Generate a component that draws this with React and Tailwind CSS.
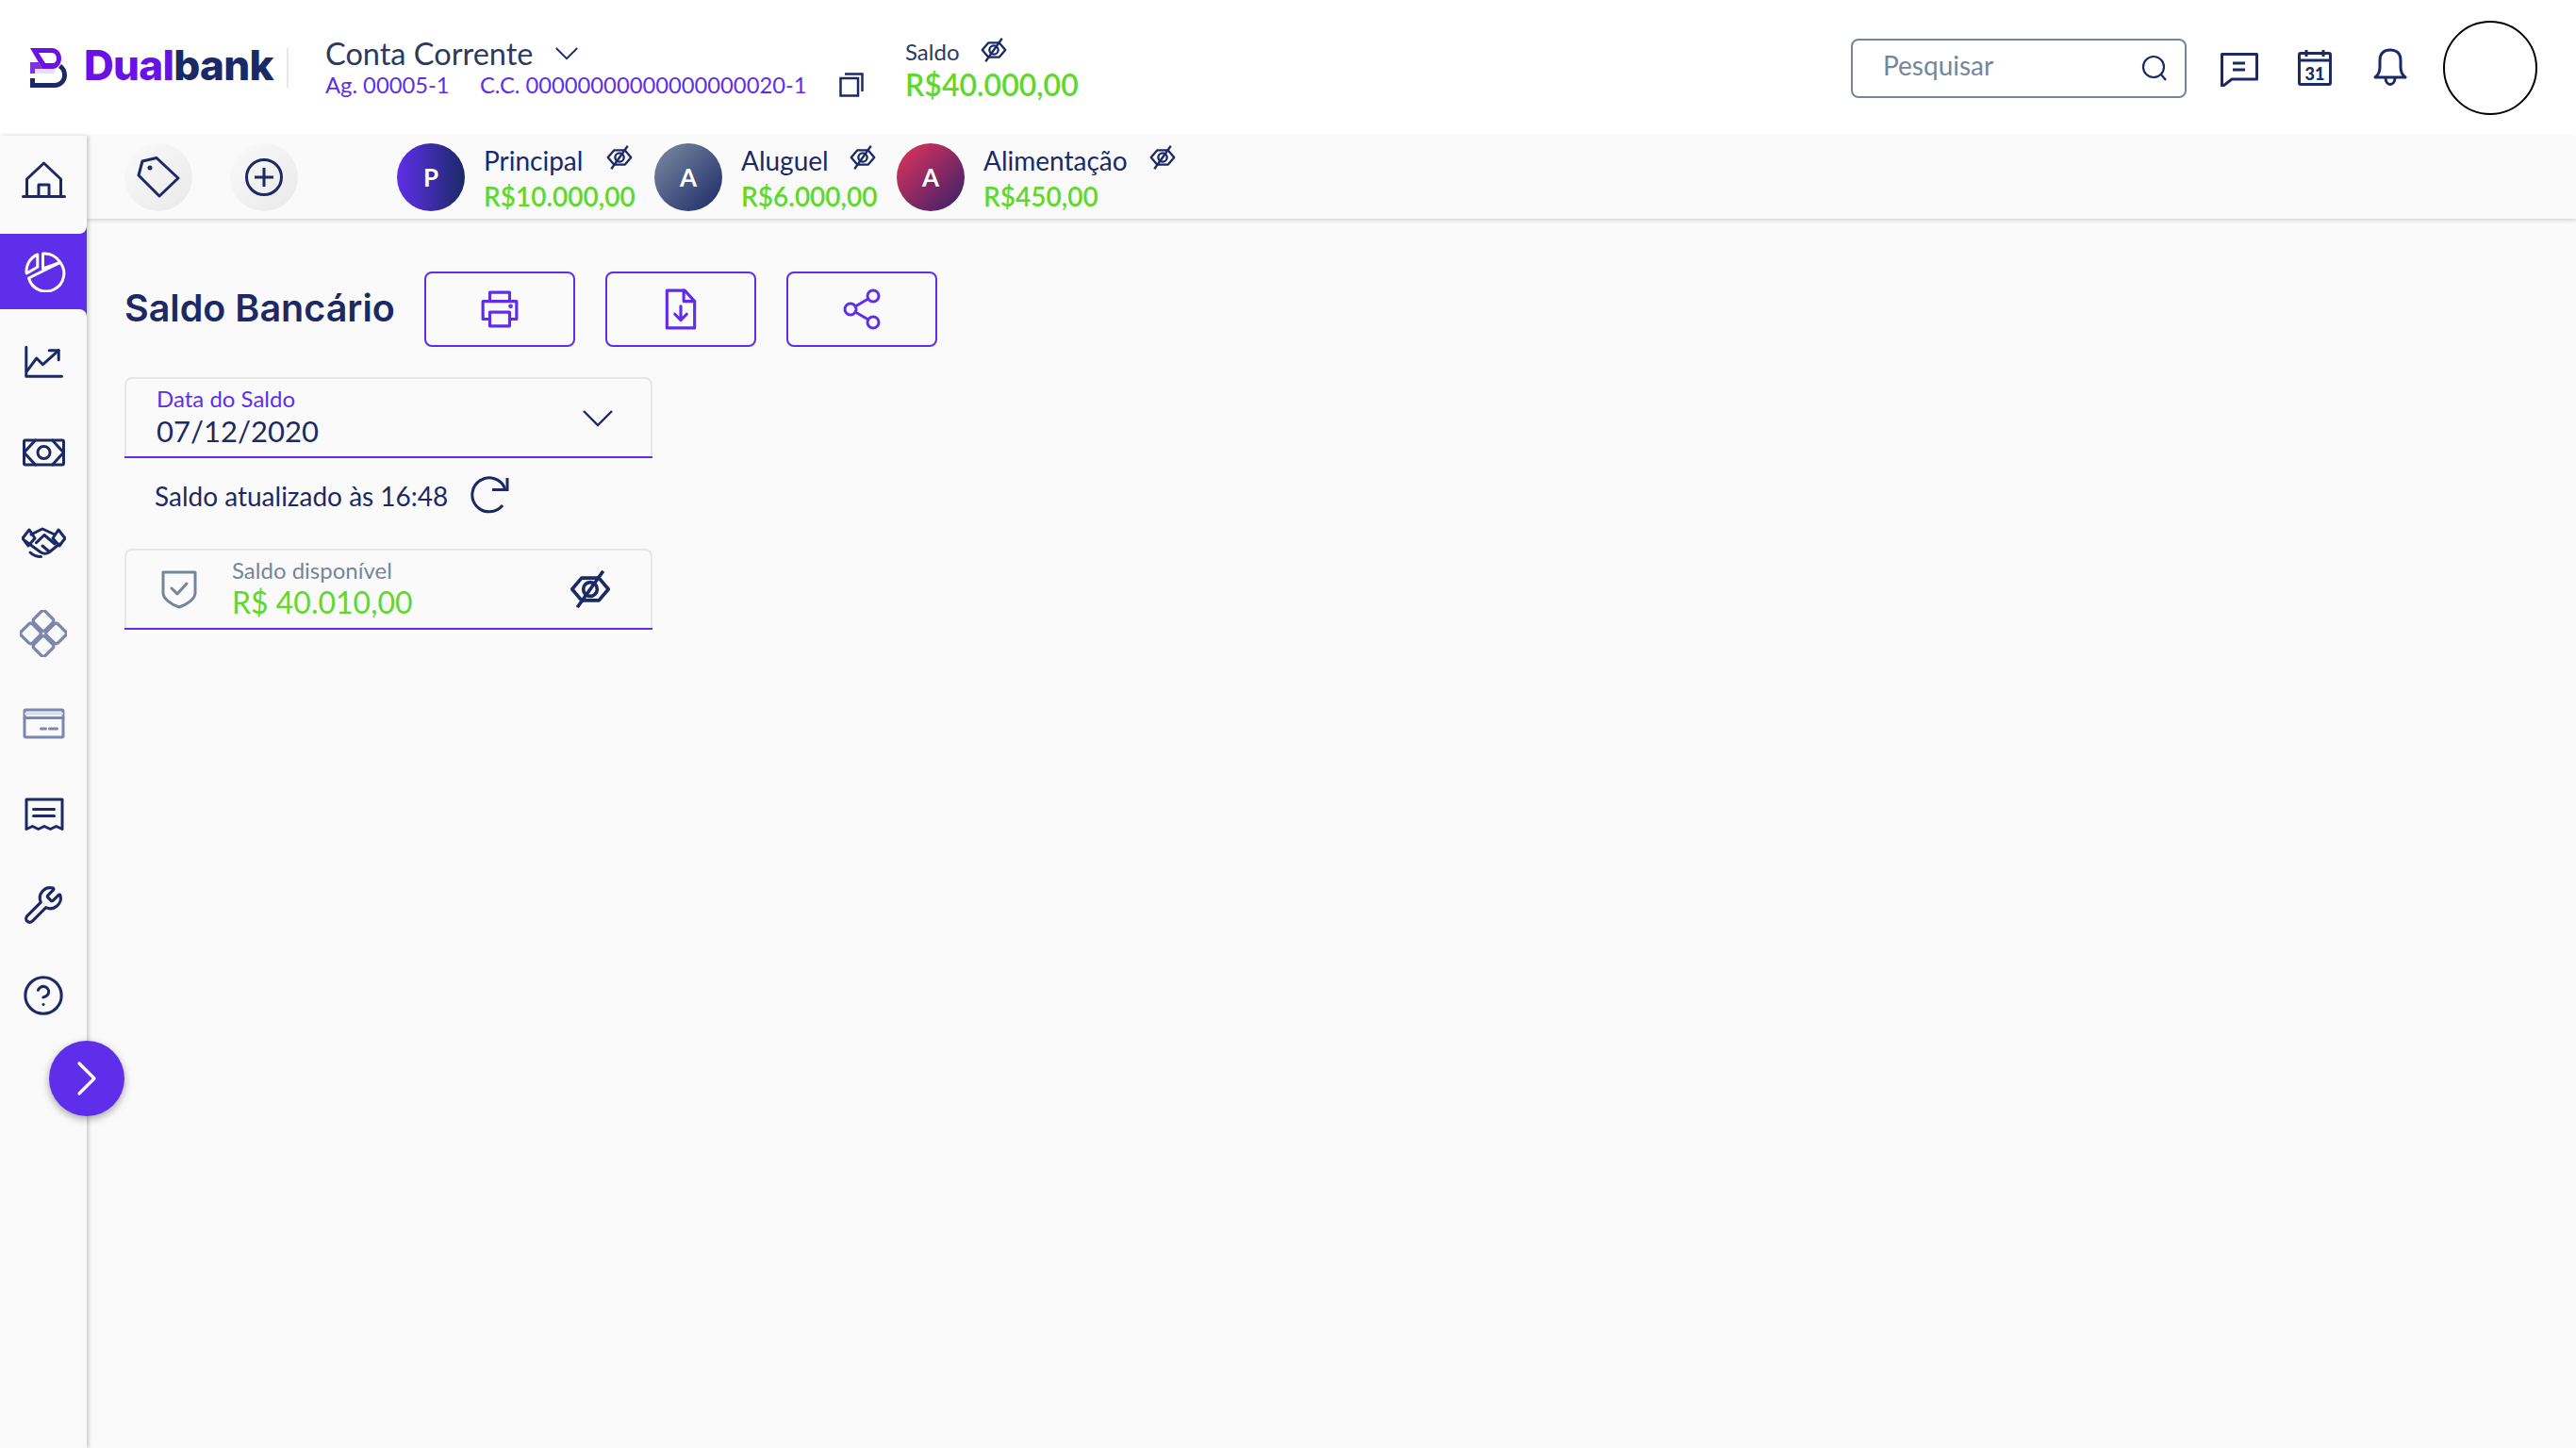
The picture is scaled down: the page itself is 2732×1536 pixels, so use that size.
import { ChevronRight, Wrench, CircleHelp, Share2 } from "lucide-react";

const navy = "#1b2a66";

const EyeOff = ({ className }) => (
  <svg viewBox="0 0 24 24" fill="none" stroke="currentColor" strokeWidth="2" strokeLinejoin="round" className={className}>
    <path d="M1.5 12 7 5.5h10L22.5 12 17 18.5H7Z" />
    <circle cx="12" cy="12" r="4" />
    <path d="M19.5 1.5 4.5 22.5" />
  </svg>
);

const Caret = ({ className }) => (
  <svg viewBox="0 0 32 18" fill="none" stroke="currentColor" strokeWidth="2.4" className={className}>
    <path d="M1 1l15 15L31 1" />
  </svg>
);

const DualLogo = () => (
  <svg viewBox="0 0 39 42" className="w-[39px] h-[42px] shrink-0">
    <path fillRule="evenodd" d="M0 0H23C29 0 33 5 33 11C33 17 29 22 24 22H13L0 0ZM9 5L16 16H24C26 16 28 14 28 11C28 8 26 5 23 5Z" fill="#6a11e8" />
    <path d="M0 15H9L13 22H5V27H0Z" fill="#7c35d8" />
    <rect x="5" y="22" width="21" height="5" fill="#e9defa" />
    <path d="M0 32H5V37H26C31 37 34 33 34 29C34 25 33 23 30 21L33 17C37 20 39 24 39 29C39 36 33 42 26 42H0Z" fill={navy} />
  </svg>
);

// sidebar glyphs, all on a 44 unit grid
const navIcons = {
  home: <path d="M0 38.5h44M4 38.5V20L22 3l18 17v18.5M16.5 38.5V26h11v12.5" />,
  chart: (
    <>
      <path d="M21 3A19 19 0 0 1 39.3 12.3L21 19Z" />
      <path d="M39.3 12.3A19 19 0 1 1 6 29L39.3 12.3" />
      <path d="M15.3 4V17.3L3.7 24A19 19 0 0 1 15.3 4Z" />
    </>
  ),
  trend: (
    <>
      <path d="M3.3 6.3V37.3H41" />
      <path d="M4.3 31.3 14.3 18 21 24.7 37.7 9.7" />
      <path d="M27.7 9.7H37.7V19.7" />
    </>
  ),
  money: (
    <>
      <rect x="1" y="9" width="42" height="26" rx="1.5" />
      <path d="M1 22 13 9M31 9 43 22 31 35M13 35 1 22" />
      <circle cx="22" cy="22" r="6.5" />
    </>
  ),
  deal: (
    <>
      <path d="M1 17 8 8l6 9-7 8Z" />
      <path d="M46 17 39 8l-6 9 7 8Z" />
      <path d="M10 13 22 7l13 6" />
      <path d="M4 20l16 11.7c3 2 6 2 9 .3L40 23" />
      <path d="M15.5 21.7 24 13.5l11 9.5M22 25l7 6" />
      <path d="M9 32c3 3 7 4.5 11.5 4.5" />
    </>
  ),
  card: (
    <>
      <rect x="1.5" y="7" width="41" height="29" rx="1.5" />
      <path d="M1.5 15.5h41" />
      <path d="M3 11h38" stroke="#d8dbe8" />
      <path d="M19 27h5M28 27h8" />
    </>
  ),
  receipt: (
    <>
      <path d="M3.5 37.5V6H41.5V37.5L35.2 34.5 28.9 37.5 22.5 34.5 16.2 37.5 9.9 34.5Z" />
      <path d="M11 16.5h22M11 23.5h22" />
    </>
  ),
};

const NavSvg = ({ name, className }) => (
  <svg viewBox={name === "deal" ? "0 0 47 44" : "-1.5 0 47 44"} fill="none" stroke="currentColor" strokeWidth="3" strokeLinecap="round" strokeLinejoin="round" className={className}>
    {navIcons[name]}
  </svg>
);

const Diamonds = () => (
  <svg viewBox="0 0 50 50" fill="none" stroke="#7d86ad" strokeWidth="3.4" strokeLinejoin="round" className="w-[50px] h-[50px]">
    <rect x="16.5" y="3" width="17" height="17" rx="3" transform="rotate(45 25 11.5)" />
    <rect x="16.5" y="30" width="17" height="17" rx="3" transform="rotate(45 25 38.5)" />
    <rect x="3" y="16.5" width="17" height="17" rx="3" transform="rotate(45 11.5 25)" />
    <rect x="30" y="16.5" width="17" height="17" rx="3" transform="rotate(45 38.5 25)" />
  </svg>
);

const iconSize = "w-[47px] h-[44px]";

const sideItems = [
  { key: "home", icon: <NavSvg name="home" className={`${iconSize} text-[#1b2a66]`} /> },
  { key: "chart", active: true, icon: <NavSvg name="chart" className={`${iconSize} text-white`} /> },
  { key: "trend", icon: <NavSvg name="trend" className={`${iconSize} text-[#1b2a66]`} /> },
  { key: "money", icon: <NavSvg name="money" className={`${iconSize} text-[#1b2a66]`} /> },
  { key: "deal", icon: <NavSvg name="deal" className={`${iconSize} text-[#1b2a66]`} /> },
  { key: "diamonds", icon: <Diamonds /> },
  { key: "card", icon: <NavSvg name="card" className={`${iconSize} text-[#7d86ad]`} /> },
  { key: "receipt", icon: <NavSvg name="receipt" className={`${iconSize} text-[#1b2a66]`} /> },
  { key: "tools", icon: <Wrench size={44} strokeWidth={1.7} className="text-[#1b2a66]" /> },
  { key: "help", icon: <CircleHelp size={46} strokeWidth={1.6} className="text-[#1b2a66]" /> },
];

const Sidebar = () => (
  <aside className="relative w-[92px] shrink-0 bg-[#fafafa] shadow-[2px_0_4px_rgba(0,0,0,0.2)] z-10 pt-2 flex flex-col gap-4">
    {sideItems.map((item) => (
      <div key={item.key} className={`relative h-20 flex items-center justify-center ${item.active ? "bg-[#5f2eea]" : ""}`}>
        {item.active && (
          <>
            <div className="absolute right-0 -top-2 w-2 h-2 bg-[#5f2eea]">
              <div className="w-full h-full bg-[#fafafa] rounded-br-lg" />
            </div>
            <div className="absolute right-0 -bottom-2 w-2 h-2 bg-[#5f2eea]">
              <div className="w-full h-full bg-[#fafafa] rounded-tr-lg" />
            </div>
          </>
        )}
        {item.icon}
      </div>
    ))}
    <button className="absolute left-[52px] top-[960px] w-20 h-20 rounded-full bg-[#5f2eea] text-white flex items-center justify-center shadow-[0_3px_8px_rgba(0,0,0,0.35)]">
      <ChevronRight size={64} strokeWidth={1.2} />
    </button>
  </aside>
);

const accounts = [
  { name: "Principal", letter: "P", value: "R$10.000,00", bg: "bg-[linear-gradient(90deg,#5f2eea,#1b2a66)]", w: "w-[158px]", gap: "mr-[23px]" },
  { name: "Aluguel", letter: "A", value: "R$6.000,00", bg: "bg-[linear-gradient(135deg,#7d8ba3,#1b2a66)]", w: "w-[143px]", gap: "mr-[22px]" },
  { name: "Alimentação", letter: "A", value: "R$450,00", bg: "bg-[linear-gradient(135deg,#e6335a,#33206b)]", w: "w-[204px]", gap: "" },
];

const RoundAction = ({ children }) => (
  <div className="w-[72px] h-[72px] rounded-full bg-[linear-gradient(135deg,#fafafa,#e9e9e9)] flex items-center justify-center">
    {children}
  </div>
);

const OutlineButton = ({ children }) => (
  <button className="w-40 h-20 rounded-lg border-2 border-[#5f2eea] text-[#5f2eea] flex items-center justify-center">
    {children}
  </button>
);

export default function App() {
  return (
    <div className="min-h-screen bg-[#fafafa] text-[#1b2a66] font-['Lato',sans-serif]">
      <header className="h-36 bg-white flex items-center">
        <div className="flex items-center pl-[32px] w-[304px] shrink-0">
          <DualLogo />
          <span className="ml-[18px] -mt-1.5 text-[44px] leading-none font-['Inter',sans-serif] font-extrabold tracking-[-0.7px]">
            <span className="text-[#6a11e8]">Dual</span>
            <span className="text-[#1b2a66]">bank</span>
          </span>
        </div>
        <div className="w-0.5 h-[42px] bg-[#e6e6e6]" />
        <div className="ml-[39px] w-[615px] shrink-0">
          <div className="flex items-center text-[32.5px] leading-[36px] text-[#2c3a5e]">
            Conta Corrente
            <Caret className="ml-[24px] w-[24px] h-[14px] text-[#1b2a66]" />
          </div>
          <div className="flex items-center text-[23.75px] leading-[30px] text-[#5f2eea] whitespace-nowrap">
            <span className="w-[164px]">Ag. 00005-1</span>
            <span>C.C. 00000000000000000020-1</span>
            <svg viewBox="0 0 26 26" fill="none" stroke={navy} strokeWidth="2.5" className="ml-[34px] w-[26px] h-[26px]">
              <rect x="1.5" y="6" width="18.5" height="18.5" />
              <path d="M6 1.5h18.5V20" />
            </svg>
          </div>
        </div>
        <div className="mt-1">
          <div className="flex items-center text-[24px] leading-[32px] text-[#2c3a5e]">
            Saldo
            <EyeOff className="ml-[22px] -mt-1 w-[28px] h-[28px] text-[#1b2a66]" />
          </div>
          <div className="text-[32px] leading-[38px] font-semibold text-[#5fd82c]">R$40.000,00</div>
        </div>
        <div className="ml-auto flex items-center pr-[41px]">
          <div className="w-[356px] h-[63px] rounded-lg border-2 border-[#75869a] flex items-center justify-between pl-[32px] pr-[18px]">
            <span className="text-[28px] text-[#75869a] -mt-1.5">Pesquisar</span>
            <svg viewBox="0 0 28 28" fill="none" stroke={navy} strokeWidth="2.2" className="w-[28px] h-[28px]">
              <circle cx="13" cy="13" r="11" />
              <path d="M21 21l5 6" />
            </svg>
          </div>
          <svg viewBox="0 0 40 36" fill="none" stroke={navy} strokeWidth="3" strokeLinejoin="round" className="ml-[36px] mt-1 w-[40px] h-[36px]">
            <path d="M1.5 1.5H38.5V28H12L3 35H1.5Z" />
            <path d="M13 11h13M13 18h13" />
          </svg>
          <svg viewBox="0 0 36 38" fill="none" stroke={navy} strokeWidth="3" strokeLinejoin="round" className="ml-[42px] w-[36px] h-[38px]">
            <rect x="1.5" y="3.5" width="33" height="33" rx="1.5" />
            <path d="M1.5 11h33M9 0v7M27 0v7" />
            <text x="18" y="32" fontSize="18" fontWeight="900" textAnchor="middle" fill={navy} stroke="none" fontFamily="Lato">31</text>
          </svg>
          <svg viewBox="0 0 36 42" fill="none" stroke={navy} strokeWidth="3" strokeLinejoin="round" className="ml-[44px] w-[36px] h-[42px]">
            <path d="M2 31C6 28 7 25 7 20V13C7 6 11 2 18 2S29 6 29 13V20C29 25 30 28 34 31Z" />
            <path d="M13 31C13 41 23 41 23 31" />
          </svg>
          <div className="ml-[38px] w-[100px] h-[100px] rounded-full border-2 border-black" />
        </div>
      </header>

      <div className="flex min-h-[1392px]">
        <Sidebar />
        <div className="flex-1">
          <div className="h-[88px] flex items-center pl-[40px] shadow-[0_2px_4px_rgba(0,0,0,0.15)]">
            <RoundAction>
              <svg viewBox="0 0 46 44" fill="none" stroke={navy} strokeWidth="3" strokeLinejoin="round" className="w-[46px] h-[44px]">
                <path d="M6 5 21 1.5 44 23 24 42 2 20Z" />
                <circle cx="14" cy="12" r="1" fill={navy} />
              </svg>
            </RoundAction>
            <div className="ml-[40px]">
              <RoundAction>
                <svg viewBox="0 0 44 44" fill="none" stroke={navy} strokeWidth="3" className="w-[44px] h-[44px]">
                  <circle cx="22" cy="22" r="18.5" />
                  <path d="M22 12v20M12 22h20" />
                </svg>
              </RoundAction>
            </div>
            <div className="ml-[105px] flex items-center">
              {accounts.map((acc) => (
                <div key={acc.name} className={`flex items-center ${acc.gap}`}>
                  <div className={`w-[72px] h-[72px] rounded-full ${acc.bg} text-white font-bold text-[26px] flex items-center justify-center`}>
                    {acc.letter}
                  </div>
                  <div className={`ml-5 mt-0.5 ${acc.w}`}>
                    <div className="flex items-start justify-between text-[28px] leading-[38px]">
                      {acc.name}
                      <EyeOff className="mt-0.5 w-[28px] h-[28px]" />
                    </div>
                    <div className="text-[28px] leading-[38px] font-semibold text-[#5fd82c]">{acc.value}</div>
                  </div>
                </div>
              ))}
            </div>
          </div>

          <main className="pl-[40px] pt-[56px]">
            <div className="flex items-center h-20">
              <h1 className="text-[39.5px] font-semibold font-['Inter',sans-serif] w-[318px]">Saldo Bancário</h1>
              <div className="flex gap-8">
                <OutlineButton>
                  <svg viewBox="0 0 40 40" fill="none" stroke="currentColor" strokeWidth="3" strokeLinejoin="round" className="w-[42px] h-[42px]">
                    <path d="M10 12V3h20v9M10 30H3V12h34v18h-7" />
                    <rect x="10" y="23" width="20" height="14" />
                    <circle cx="31" cy="17" r="0.8" fill="currentColor" />
                  </svg>
                </OutlineButton>
                <OutlineButton>
                  <svg viewBox="0 0 32 42" fill="none" stroke="currentColor" strokeWidth="3" strokeLinejoin="round" strokeLinecap="round" className="w-[34px] h-[44px]">
                    <path d="M2 2h18l10 11v27H2Z" />
                    <path d="M19 2v11h11" />
                    <path d="M16 18v14M10 26l6 6 6-6" />
                  </svg>
                </OutlineButton>
                <OutlineButton>
                  <Share2 size={48} strokeWidth={1.5} />
                </OutlineButton>
              </div>
            </div>

            <div className="mt-[32px] w-[560px] h-[84px] rounded-t-lg border-2 border-b-0 border-[#e6e6e6] relative pl-[32px] pt-[7px]">
              <div className="text-[24px] leading-[28px] text-[#5f2eea]">Data do Saldo</div>
              <div className="text-[31px] leading-[40px] text-[#1b2a66]">07/12/2020</div>
              <Caret className="absolute right-[40px] top-[33px] w-[32px] h-[18px] text-[#1b2a66]" />
            </div>
            <div className="w-[560px] h-0.5 bg-[#5f2eea]" />

            <div className="mt-[20px] ml-[32px] flex items-center text-[28px] leading-[40px]">
              Saldo atualizado às 16:48
              <svg viewBox="0 0 44 44" fill="none" stroke={navy} strokeWidth="3" className="ml-[22px] -mt-1 w-[44px] h-[44px]">
                <path d="M36 34A18 18 0 1 1 38.5 16" />
                <path d="M41 5V17.5H25" />
              </svg>
            </div>

            <div className="mt-[36px] w-[560px] h-[84px] rounded-t-lg border-2 border-b-0 border-[#e6e6e6] flex items-center pl-[36px] pr-[42px]">
              <svg viewBox="0 0 40 44" fill="none" stroke="#75869a" strokeWidth="3" strokeLinejoin="round" strokeLinecap="round" className="w-[40px] h-[44px]">
                <path d="M3 4h34v22c0 6-8 12-17 15C11 38 3 32 3 26Z" />
                <path d="M12 21l6 6 10-11" />
              </svg>
              <div className="ml-[36px]">
                <div className="text-[24px] leading-[27px] text-[#75869a]">Saldo disponível</div>
                <div className="text-[32px] leading-[42px] text-[#5fd82c]">R$ 40.010,00</div>
              </div>
              <EyeOff className="ml-auto w-[44px] h-[44px] text-[#1b2a66]" />
            </div>
            <div className="w-[560px] h-0.5 bg-[#5f2eea]" />
          </main>
        </div>
      </div>
    </div>
  );
}
